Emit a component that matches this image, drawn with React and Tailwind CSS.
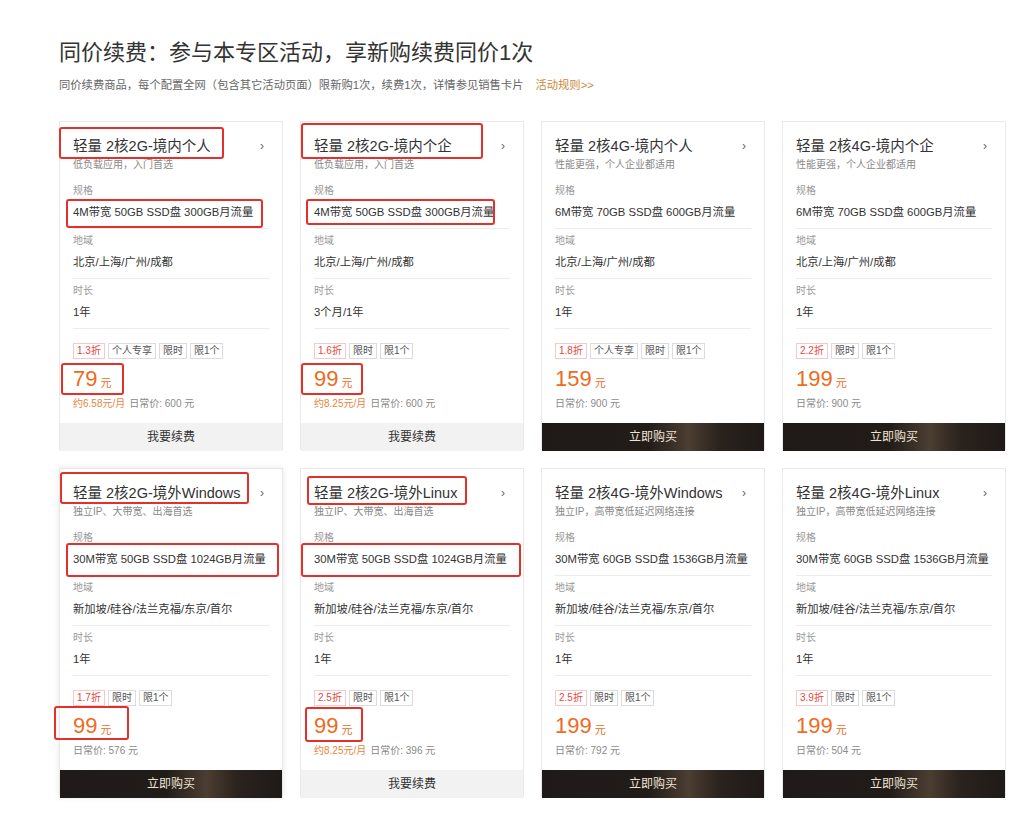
const cards = [
  {
    title: "轻量 2核2G-境内个人", sub: "低负载应用，入门首选",
    spec: "4M带宽 50GB SSD盘 300GB月流量", region: "北京/上海/广州/成都", time: "1年",
    off: "1.3折", tags: ["个人专享", "限时", "限1个"], price: "79", monthly: "约6.58元/月", daily: "600", renew: true,
    boxes: [
      "left-[-1px] top-[5px] w-[165px] h-[32px]",
      "left-[6px] top-[77px] w-[197px] h-[29px]",
      "left-[1px] top-[241px] w-[63px] h-[32px]",
    ],
  },
  {
    title: "轻量 2核2G-境内个企", sub: "低负载应用，入门首选",
    spec: "4M带宽 50GB SSD盘 300GB月流量", region: "北京/上海/广州/成都", time: "3个月/1年",
    off: "1.6折", tags: ["限时", "限1个"], price: "99", monthly: "约8.25元/月", daily: "600", renew: true,
    boxes: [
      "left-[0px] top-[1px] w-[182px] h-[36px]",
      "left-[5px] top-[77px] w-[189px] h-[26px]",
      "left-[0px] top-[241px] w-[62px] h-[32px]",
    ],
  },
  {
    title: "轻量 2核4G-境内个人", sub: "性能更强，个人企业都适用",
    spec: "6M带宽 70GB SSD盘 600GB月流量", region: "北京/上海/广州/成都", time: "1年",
    off: "1.8折", tags: ["个人专享", "限时", "限1个"], price: "159", daily: "900",
  },
  {
    title: "轻量 2核4G-境内个企", sub: "性能更强，个人企业都适用",
    spec: "6M带宽 70GB SSD盘 600GB月流量", region: "北京/上海/广州/成都", time: "1年",
    off: "2.2折", tags: ["限时", "限1个"], price: "199", daily: "900",
  },
  {
    title: "轻量 2核2G-境外Windows", sub: "独立IP、大带宽、出海首选",
    spec: "30M带宽 50GB SSD盘 1024GB月流量", region: "新加坡/硅谷/法兰克福/东京/首尔", time: "1年",
    off: "1.7折", tags: ["限时", "限1个"], price: "99", daily: "576", shadow: true,
    boxes: [
      "left-[0px] top-[3px] w-[189px] h-[32px]",
      "left-[6px] top-[74px] w-[213px] h-[34px]",
      "left-[-6px] top-[237px] w-[75px] h-[34px]",
    ],
  },
  {
    title: "轻量 2核2G-境外Linux", sub: "独立IP、大带宽、出海首选",
    spec: "30M带宽 50GB SSD盘 1024GB月流量", region: "新加坡/硅谷/法兰克福/东京/首尔", time: "1年",
    off: "2.5折", tags: ["限时", "限1个"], price: "99", monthly: "约8.25元/月", daily: "396", renew: true,
    boxes: [
      "left-[6px] top-[7px] w-[160px] h-[29px]",
      "left-[0px] top-[74px] w-[220px] h-[34px]",
      "left-[4px] top-[238px] w-[58px] h-[35px]",
    ],
  },
  {
    title: "轻量 2核4G-境外Windows", sub: "独立IP，高带宽低延迟网络连接",
    spec: "30M带宽 60GB SSD盘 1536GB月流量", region: "新加坡/硅谷/法兰克福/东京/首尔", time: "1年",
    off: "2.5折", tags: ["限时", "限1个"], price: "199", daily: "792",
  },
  {
    title: "轻量 2核4G-境外Linux", sub: "独立IP，高带宽低延迟网络连接",
    spec: "30M带宽 60GB SSD盘 1536GB月流量", region: "新加坡/硅谷/法兰克福/东京/首尔", time: "1年",
    off: "3.9折", tags: ["限时", "限1个"], price: "199", daily: "504",
  },
];

function Field({ label, value }) {
  return (
    <div className="pt-[5px] pb-[7px] border-b border-[#ececec]">
      <div className="text-[10px] leading-[14px] text-[#999]">{label}</div>
      <div className="mt-[5px] text-[11.3px] leading-[18px] text-[#333] whitespace-nowrap">{value}</div>
    </div>
  );
}

function Card({ c }) {
  return (
    <div className={"relative bg-white border border-[#e9e9e9] flex flex-col " + (c.shadow ? "shadow-[0_0_6px_rgba(0,0,0,0.1)]" : "")}>
      <div className="px-[13px] pt-[14px]">
        {/* head */}
        <div className="flex items-center justify-between">
          <div className="text-[14.5px] leading-[20px] text-[#333] whitespace-nowrap">{c.title}</div>
          <span className="text-[12px] leading-[20px] text-[#666] mr-[5px]">›</span>
        </div>
        <div className="mt-[2px] text-[10px] leading-[14px] text-[#888]">{c.sub}</div>

        <div className="mt-[7px]">
          <Field label="规格" value={c.spec} />
          <Field label="地域" value={c.region} />
          <Field label="时长" value={c.time} />
        </div>

        {/* tags */}
        <div className="mt-[14px] flex gap-[3px] text-[10px] leading-[12px]">
          <span className="border border-[#f5c9c9] text-[#e5473f] px-[3px] py-[1px]">{c.off}</span>
          {c.tags.map((t) => (
            <span key={t} className="border border-[#dcdcdc] text-[#555] px-[3px] py-[1px]">{t}</span>
          ))}
        </div>

        <div className="mt-[5px] h-[28px] flex items-end text-[#ef6a22]">
          <span className="text-[22px] leading-[26px]">{c.price}</span>
          <span className="ml-[3px] mb-[2px] text-[11px] leading-[14px]">元</span>
        </div>

        <div className="mt-[5px] text-[10px] leading-[14px] text-[#8a8a8a]">
          {c.monthly && <span className="text-[#e8843c] mr-[4px]">{c.monthly}</span>}
          日常价: {c.daily} 元
        </div>
      </div>

      <div className="mt-auto pt-[12px]">
        {c.renew ? (
          <div className="h-[28px] bg-[#f2f2f2] text-[#333] text-[12px] flex items-center justify-center">我要续费</div>
        ) : (
          <div className="h-[28px] bg-[linear-gradient(90deg,#1f1a18_0%,#221c19_48%,#4b3e32_66%,#2a221d_80%,#1f1a18_100%)] text-[#efe4d4] text-[12px] flex items-center justify-center">立即购买</div>
        )}
      </div>

      {c.boxes && c.boxes.map((b, i) => (
        <span key={i} className={"absolute border-2 border-[#e1312a] rounded-[3px] pointer-events-none " + b} />
      ))}
    </div>
  );
}

export default function App() {
  return (
    <div className="min-h-screen bg-white font-['Liberation_Sans','Noto_Sans_CJK_SC',sans-serif]">
      <div className="w-[947px] ml-[59px] pt-[40px] pb-[16px]">
        <div className="text-[22px] leading-[26px] text-[#333]">同价续费：参与本专区活动，享新购续费同价1次</div>
        <div className="mt-[11px] text-[11.3px] leading-[16px] text-[#666]">
          同价续费商品，每个配置全网（包含其它活动页面）限新购1次，续费1次，详情参见销售卡片
          <span className="ml-[12px] text-[#c98a3a]">活动规则&gt;&gt;</span>
        </div>

        <div className="mt-[28px] grid grid-cols-4 gap-x-[17px] gap-y-[18px] auto-rows-[329px]">
          {cards.map((c) => (
            <Card key={c.title} c={c} />
          ))}
        </div>
      </div>
    </div>
  );
}
